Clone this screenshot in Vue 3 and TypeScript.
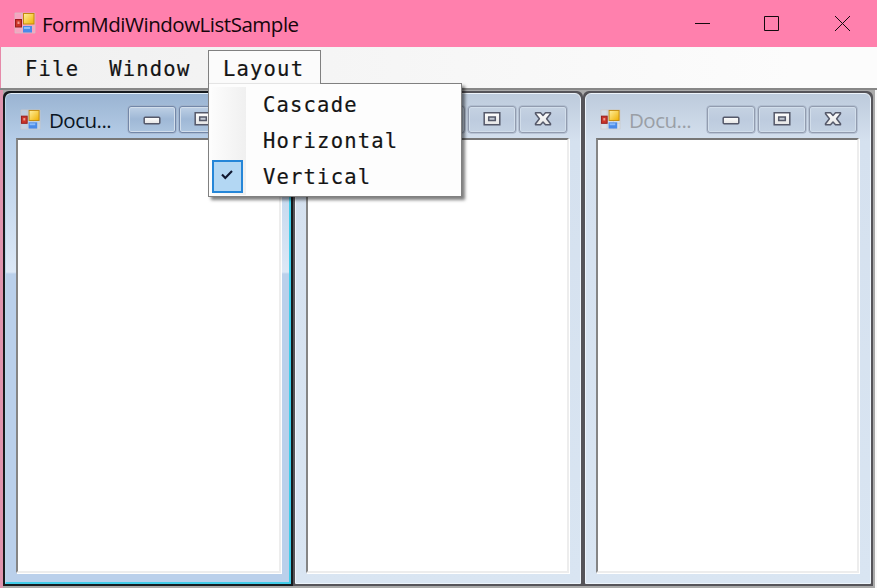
<script setup lang="ts">
interface Child { id: number; title: string; active: boolean }
const children: Child[] = [
  { id: 1, title: 'Docu...', active: true },
  { id: 2, title: '', active: false },
  { id: 3, title: 'Docu...', active: false },
]
const menus: string[] = ['File', 'Window']
const layouts: { label: string; checked: boolean }[] = [
  { label: 'Cascade', checked: false },
  { label: 'Horizontal', checked: false },
  { label: 'Vertical', checked: true },
]
</script>

<template>
  <div class="form">
    <svg class="defs" width="0" height="0">
      <defs>
        <linearGradient id="gold" x1="0" y1="0" x2="1" y2="1">
          <stop offset="0" stop-color="#fff0a0" /><stop offset="1" stop-color="#f0b000" />
        </linearGradient>
        <linearGradient id="glyph" x1="0" y1="0" x2="0" y2="1">
          <stop offset="0" stop-color="#ffffff" /><stop offset="1" stop-color="#e4e4e4" />
        </linearGradient>
        <symbol id="app-icon" viewBox="0 0 22 22">
          <path d="M1 1h20v20H1zM1 7.5h20M7.500 1v20M1 15h20M14 1v20" fill="#e8e8e8" fill-opacity=".35" stroke="#cfc8c4" stroke-opacity=".7" />
          <rect x="9.500" y="1.500" width="10.500" height="10.500" fill="url(#gold)" stroke="#c48a0c" />
          <rect x="1.500" y="7.500" width="6" height="7.500" fill="#ca3528" stroke="#971c1c" />
          <rect x="3.500" y="9.500" width="2" height="2.500" fill="#f19a8c" />
          <rect x="9" y="14" width="9" height="6.500" fill="#4a8ae8" />
          <rect x="10" y="15" width="6" height="2" fill="#8dbcf8" />
        </symbol>
      </defs>
    </svg>

    <header class="titlebar">
      <svg class="app-icon" width="22" height="22"><use href="#app-icon" /></svg>
      <h1 class="title">FormMdiWindowListSample</h1>
      <svg class="captions" width="158" height="17" viewBox="0 0 158 17" fill="none" stroke="#140a0e">
        <path d="M1 8.500h15" />
        <path d="M70.500 1.500h14v14h-14z" />
        <path d="M141 1l15 15M156 1l-15 15" />
      </svg>
    </header>

    <nav class="menubar">
      <span v-for="m in menus" :key="m" class="menu-item">{{ m }}</span>
      <div class="menu-item open">
        Layout
        <div class="dropdown">
          <div v-for="l in layouts" :key="l.label" class="option">
            <span class="gutter">
              <span v-if="l.checked" class="check">
                <svg width="14" height="12" viewBox="0 0 14 12"><path d="M2 5.500l3.300 3.500L12 2" fill="none" stroke="#101830" stroke-width="2.100" /></svg>
              </span>
            </span>
            <span>{{ l.label }}</span>
          </div>
        </div>
      </div>
    </nav>

    <main class="mdi">
      <section v-for="c in children" :key="c.id" class="child" :class="{ active: c.active }">
        <div class="frame">
          <div class="child-bar">
            <svg class="child-icon" width="21" height="21"><use href="#app-icon" /></svg>
            <span v-if="c.title" class="child-title">{{ c.title }}</span>
            <div class="buttons">
              <span class="button">
                <svg width="20" height="14" viewBox="0 0 20 14"><rect x="2.200" y="5.200" width="15.600" height="6.600" rx="1" fill="url(#glyph)" stroke="#55596a" stroke-width="1.500" /></svg>
              </span>
              <span class="button">
                <svg width="20" height="14" viewBox="0 0 20 14"><path d="M2.200 .8h15.600v12H2.200z" fill="url(#glyph)" stroke="#55596a" stroke-width="1.500" /><rect x="6.700" y="5" width="6.600" height="3.500" fill="#c3cad5" stroke="#55596a" stroke-width="1.500" /></svg>
              </span>
              <span class="button">
                <svg width="20" height="14" viewBox="0 0 20 14"><path d="M2.500 .8h5L10 3.500 12.500 .8h5v1L13.600 6.800l3.900 5v1h-5L10 10.100l-2.500 2.700h-5v-1l3.900-5-3.900-5z" fill="url(#glyph)" stroke="#55596a" stroke-width="1.500" stroke-linejoin="round" /></svg>
              </span>
            </div>
          </div>
          <div class="client"></div>
        </div>
      </section>
    </main>
  </div>
</template>

<style>
body { margin: 0; overflow: hidden; }
</style>

<style scoped>
* { box-sizing: border-box; }
.form { width: 877px; height: 588px; display: flex; flex-direction: column; overflow: hidden; background: #f8f8f8; font-family: "Open Sans", "Noto Sans", sans-serif; }
.defs { position: absolute; }
.titlebar { height: 47px; flex: none; display: flex; align-items: center; background: #ff80ad; padding: 0 25px 0 14px; }
.app-icon { margin-right: 6px; margin-top: -1px; }
.title { flex: 1; margin: 0; font-size: 20.500px; font-weight: 400; line-height: 28px; padding-top: 1px; letter-spacing: -0.480px; color: #16060c; white-space: nowrap; }
.captions { flex: none; }
.menubar { height: 41px; flex: none; display: flex; align-items: flex-start; padding: 3px 0 0 9px; border-left: 1px solid #e58aa9; background: linear-gradient(90deg, #f0f0f0, #fcfcfc 90%); font: 20.500px/34px "DejaVu Sans Mono", monospace; letter-spacing: 1.200px; color: #141414; -webkit-text-stroke: 0.200px #141414; }
.menu-item { position: relative; height: 34px; padding: 2px 15px 0; white-space: nowrap; }
.menu-item.open { margin-left: 2.500px; width: 113px; padding: 1px 14px 0; border: 1px solid #808080; border-bottom: 0; background: #fbfbfb; z-index: 3; }
.dropdown { position: absolute; left: -1px; top: 32px; width: 254px; height: 114px; padding: 3px 3px; border: 1px solid #808080; background: #fdfdfd; box-shadow: 3px 3px 3px rgba(0, 0, 0, .5); }
.dropdown::before { content: ""; position: absolute; left: 0; top: -1px; width: 111px; height: 1px; background: #e4e4e4; }
.option { height: 36px; display: flex; line-height: 36px; }
.gutter { width: 34px; margin-right: 17px; flex: none; background: linear-gradient(90deg, #fcfcfc, #f0f0f0); }
.check { display: flex; width: 31px; height: 33px; margin-top: 1px; align-items: center; justify-content: center; border: 2px solid #2586d8; background: #b3d7f3; padding-bottom: 3px; }
.mdi { flex: 1; min-height: 0; display: flex; padding: 2px 3px 1px 3px; background: linear-gradient(90deg, #df94ae 3px, #aaa 3px, #aaa 875px, #f8f8f8 875px); border-top: 2px solid #878787; }
.child { flex: none; width: 290px; height: 495px; margin-top: -1px; background: #555459; border-radius: 6px 6px 0 0; padding: 2px; }
.child + .child { width: 290px; padding: 2px 2px 2px 2px; }
.frame { height: 100%; display: flex; flex-direction: column; border: 1px solid #edf4fb; border-radius: 6px 6px 0 0; background: linear-gradient(#bdcbdc, #d5e1ef 48px, #d9e5f2); padding: 0 11px 10px 10px; }
.child-bar { height: 44px; flex: none; display: flex; align-items: flex-start; }
.child-icon { margin: 15px 0 0 4px; }
.child-title { margin: 11px 0 0 8px; font-size: 20.500px; line-height: 30px; letter-spacing: -0.500px; color: #9a9fa6; }
.buttons { display: flex; gap: 3px; margin-left: auto; margin-top: 12px; margin-right: 2px; }
.button { width: 48px; height: 27px; display: flex; align-items: center; justify-content: center; padding-bottom: 1px; border: 1.500px solid #929caf; border-radius: 3px; background: linear-gradient(#c5d2e2, #bdcbde 48%, #c4d2e3); box-shadow: inset 0 0 0 1px #d2deeb, 0 0 0 .5px #9fabbf; }
.client { flex: 1; background: #fff; border-style: solid; border-width: 2px; border-color: #777 #ededed #ededed #858585; box-shadow: 1px 1px #fff; }
.child.active { background: #171b1f; }
.active .frame { border-color: #e4f0fa #42cce8 #42cce8 #bbd8e8; border-right-width: 2px; border-bottom-width: 2px; padding-right: 8px; padding-bottom: 9px; background: linear-gradient(#9ab4d2, #b8cfe9 48px, #dce8f6 178px, #bad0eb 180px); }
.active .child-title { color: #0a1523; }
.active .buttons { margin-right: 3px; }
.active .button { border-color: #7387a8; background: linear-gradient(#bed0e5, #9fb8d6 48%, #adc5df); }
</style>
